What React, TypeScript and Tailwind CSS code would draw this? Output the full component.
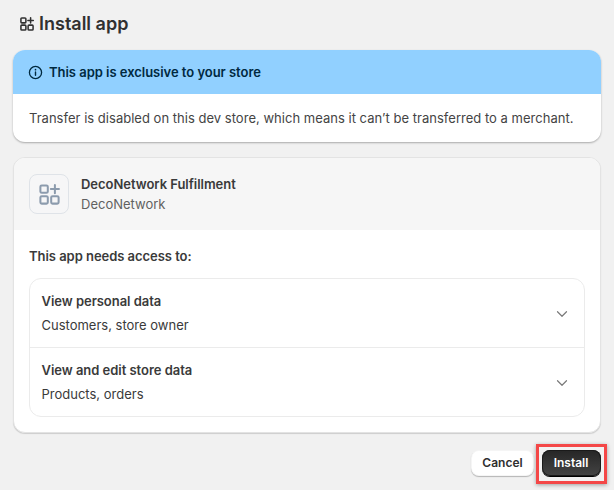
import { ChevronDown } from "lucide-react";

function AppsIcon({ className, width = 1.5 }: { className: string; width?: number }) {
  return (
    <svg viewBox="0 0 20 20" fill="none" stroke="currentColor" strokeWidth={width} className={className}>
      <rect x="3.25" y="3.25" width="5.5" height="5.5" rx="1" />
      <rect x="3.25" y="11.25" width="5.5" height="5.5" rx="1" />
      <rect x="11.25" y="11.25" width="5.5" height="5.5" rx="1" />
      <path d="M14 3v6M11 6h6" strokeLinecap="round" />
    </svg>
  );
}

function InfoIcon() {
  return (
    <svg viewBox="0 0 16 16" fill="none" className="h-[15px] w-[15px] shrink-0 text-[#00293f]">
      <circle cx="8" cy="8" r="6.5" stroke="currentColor" strokeWidth="1.4" />
      <path d="M8 7.4v3.6" stroke="currentColor" strokeWidth="1.5" strokeLinecap="round" />
      <circle cx="8" cy="5" r="0.9" fill="currentColor" />
    </svg>
  );
}

const scopes = [
  { title: "View personal data", detail: "Customers, store owner" },
  { title: "View and edit store data", detail: "Products, orders" },
];

export default function App() {
  return (
    <div className="h-[490px] w-[614px] overflow-hidden bg-[#f1f1f1] px-[13px] font-['Inter',sans-serif] text-[13px] text-[#303030]">
      {/* Header */}
      <div className="flex h-[50px] items-center gap-[3px] pb-[3px] pl-[5px]">
        <AppsIcon className="h-[18px] w-[18px] text-[#303030]" width={1.7} />
        <h1 className="text-[18px] font-semibold leading-6">Install app</h1>
      </div>

      {/* Notice */}
      <div className="h-[92px] overflow-hidden rounded-xl bg-white shadow-[0_1px_2px_rgba(0,0,0,0.3)]">
        <div className="flex h-[44px] items-center gap-[6px] bg-[#91d0ff] pl-[15px] pt-[1px] text-[#00293f]">
          <InfoIcon />
          <span className="font-semibold tracking-[-0.03px]">This app is exclusive to your store</span>
        </div>
        <p className="pl-[16px] pt-[14px] leading-5 tracking-[0.02px] text-[#444]">
          Transfer is disabled on this dev store, which means it can’t be transferred to a merchant.
        </p>
      </div>

      {/* App card */}
      <div className="mt-[15px] h-[276px] overflow-hidden rounded-xl border border-[#e3e3e3] bg-white shadow-[0_1px_1px_rgba(0,0,0,0.15)]">
        <div className="flex h-[72px] items-center gap-[12px] bg-[#f6f6f6] pl-[15px]">
          <div className="flex h-[40px] w-[40px] items-center justify-center rounded-lg border border-[#dfe3e8] bg-[#f6f6f7]">
            <AppsIcon className="h-[27px] w-[27px] text-[#8c9bad]" />
          </div>
          <div>
            <div className="font-semibold leading-5 tracking-[-0.03px] text-[#3a3a3a]">DecoNetwork Fulfillment</div>
            <div className="leading-5 text-[#616161]">DecoNetwork</div>
          </div>
        </div>
        <div className="px-[15px] pt-[16px]">
          <h2 className="font-semibold leading-5 tracking-[-0.04px] text-[#3a3a3a]">This app needs access to:</h2>
          <div className="mt-[12px] divide-y divide-[#ebebeb] rounded-xl border border-[#ebebeb]">
            {scopes.map((scope) => (
              <div key={scope.title} className="flex h-[69px] items-center justify-between pl-[11.5px] pr-[13px] [&:last-child]:h-[68px]">
                <div>
                  <div className="font-semibold leading-5 tracking-[-0.03px] text-[#3a3a3a]">{scope.title}</div>
                  <div className="mt-[4px] leading-5 text-[#3a3a3a]">{scope.detail}</div>
                </div>
                <ChevronDown className="mt-[1px] h-[18px] w-[18px] text-[#7a7a7a]" strokeWidth={1.6} />
              </div>
            ))}
          </div>
        </div>
      </div>

      {/* Actions */}
      <div className="mt-[17px] flex justify-end gap-[8px]">
        <button className="h-[26px] w-[63px] rounded-lg bg-white text-[12px] font-semibold shadow-[0_1px_1px_rgba(0,0,0,0.25),inset_0_0_0_1px_rgba(0,0,0,0.04)]">
          Cancel
        </button>
        <button className="relative h-[26px] w-[59px] rounded-lg bg-gradient-to-b from-[#262626] to-[#444] pr-[1px] text-[12px] font-semibold text-white shadow-[0_1px_0_#000,inset_0_0_0_1px_#1a1a1a]">
          Install
          <span className="absolute -bottom-[8px] -left-[6px] -right-[6px] -top-[6px] border-[3px] border-[#f44747] shadow-[0_1px_4px_rgba(0,0,0,0.35)]" />
        </button>
      </div>
    </div>
  );
}
